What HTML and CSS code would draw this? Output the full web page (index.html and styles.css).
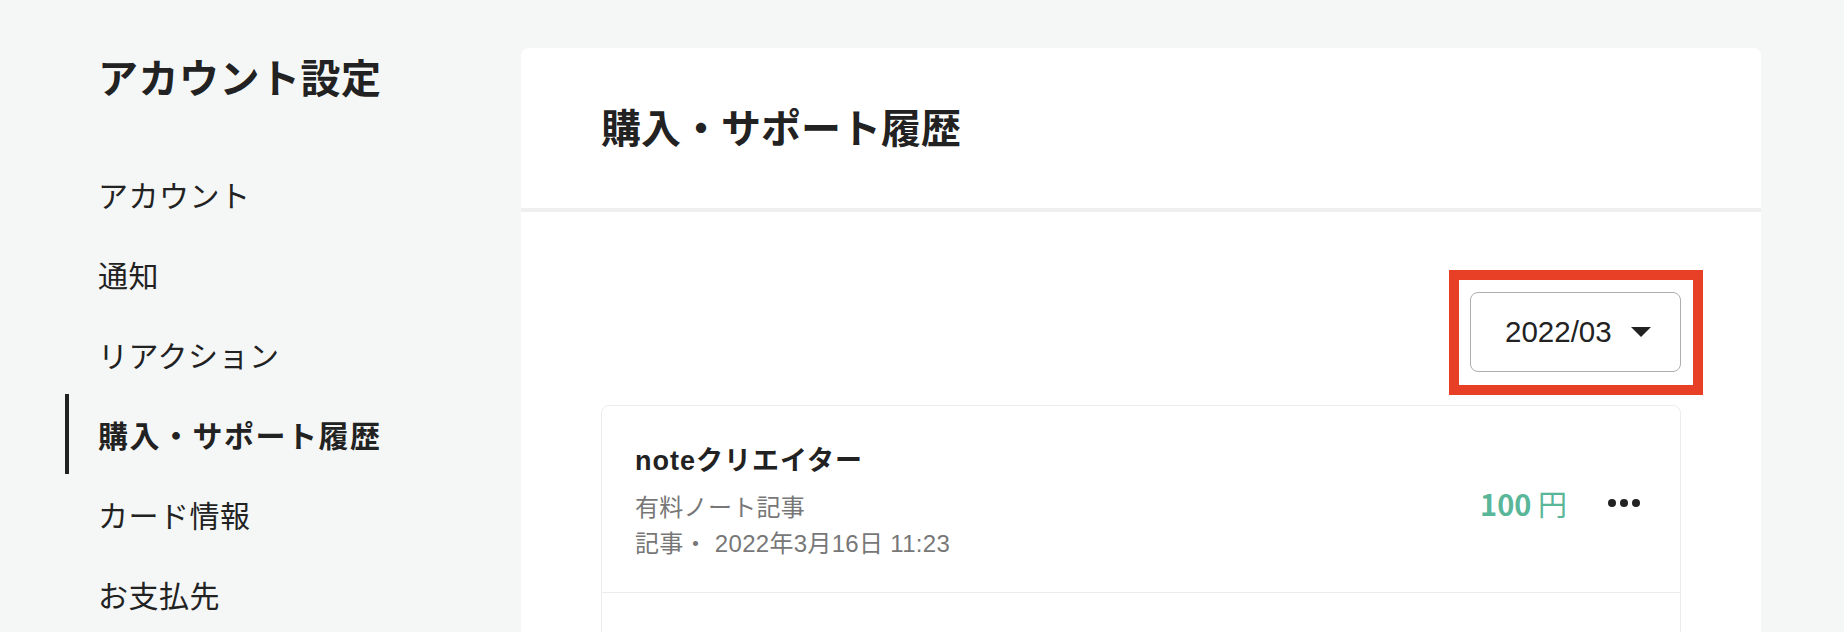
FILE: index.html
```html
<!DOCTYPE html>
<html lang="ja">
<head>
<meta charset="utf-8">
<title>購入・サポート履歴</title>
<link rel="stylesheet" href="styles.css">
</head>
<body>
<div class="page">
  <aside class="sidebar">
    <h1 class="side-title">アカウント設定</h1>
    <nav class="side-nav">
      <a class="nav-item">アカウント</a>
      <a class="nav-item">通知</a>
      <a class="nav-item">リアクション</a>
      <a class="nav-item is-active">購入・サポート履歴</a>
      <a class="nav-item">カード情報</a>
      <a class="nav-item">お支払先</a>
    </nav>
  </aside>
  <main class="panel">
    <header class="panel-head">
      <h2 class="panel-title">購入・サポート履歴</h2>
    </header>
    <section class="panel-body">
      <div class="filter-row">
        <div class="select-wrap">
          <button class="month-select">
            <span class="month-label">2022/03</span>
            <span class="caret"></span>
          </button>
        </div>
      </div>
      <ul class="history">
        <li class="history-item">
          <div class="item-info">
            <div class="item-name">noteクリエイター</div>
            <div class="item-meta item-kind">有料ノート記事</div>
            <div class="item-meta">記事・ 2022年3月16日 11:23</div>
          </div>
          <div class="item-side">
            <div class="price">100 <span class="yen">円</span></div>
            <button class="more" aria-label="メニュー">
              <svg width="32" height="8" viewBox="0 0 32 8"><circle cx="4" cy="4" r="4"/><circle cx="16" cy="4" r="4"/><circle cx="28" cy="4" r="4"/></svg>
            </button>
          </div>
        </li>
        <li class="history-item is-placeholder"></li>
      </ul>
    </section>
  </main>
</div>
</body>
</html>
```

FILE: styles.css
```css
* { box-sizing: border-box; }

html, body {
  margin: 0;
  padding: 0;
  background: #f5f7f6;
  color: #222;
  font-family: "Noto Sans CJK JP", "Noto Sans", sans-serif;
}

.page {
  display: flex;
  align-items: flex-start;
  padding: 46px 0 0 65px;
}

.sidebar {
  width: 456px;
  flex: none;
}

.side-title {
  margin: 0;
  padding-left: 33px;
  font-size: 40px;
  font-weight: 700;
  line-height: 60px;
  letter-spacing: 0.5px;
}

.side-nav {
  display: flex;
  flex-direction: column;
  margin-top: 48px;
}

.nav-item {
  display: block;
  height: 80px;
  line-height: 80px;
  font-size: 30px;
  padding-left: 29px;
  border-left: 4px solid transparent;
  color: #222;
  letter-spacing: 0.5px;
}

.nav-item.is-active {
  border-left-color: #222;
  font-weight: 700;
  letter-spacing: 1.5px;
}

.panel {
  width: 1240px;
  flex: none;
  margin-top: 2px;
  background: #fff;
  border-radius: 8px 8px 0 0;
  min-height: 700px;
}

.panel-head {
  height: 164px;
  display: flex;
  align-items: center;
  padding: 0 80px 4px;
  border-bottom: 4px solid #efefef;
}

.panel-title {
  margin: 0;
  font-size: 40px;
  font-weight: 700;
  line-height: 56px;
}

.panel-body {
  padding: 80px 80px 0;
}

.filter-row {
  display: flex;
  justify-content: flex-end;
}

.select-wrap {
  position: relative;
}

.select-wrap::after {
  content: "";
  position: absolute;
  top: -22px;
  bottom: -23px;
  left: -21px;
  right: -22px;
  border: 10px solid #e84027;
  pointer-events: none;
}

.month-select {
  display: flex;
  align-items: center;
  width: 211px;
  height: 80px;
  padding: 0 0 0 34px;
  gap: 19px;
  background: #fff;
  border: 1.5px solid #aeaeb2;
  border-radius: 8px;
  font-family: "Liberation Sans", Arial, sans-serif;
  font-size: 29.5px;
  color: #222;
}

.caret {
  width: 0;
  height: 0;
  border-left: 10px solid transparent;
  border-right: 10px solid transparent;
  border-top: 10px solid #222;
}

.history {
  list-style: none;
  margin: 33px 0 0;
  padding: 0;
  border: 1px solid #ececec;
  border-radius: 8px;
}

.history-item {
  display: flex;
  align-items: center;
  justify-content: space-between;
  padding: 37px 40px 30px 33px;
  border-bottom: 1px solid #ececec;
}

.history-item.is-placeholder {
  height: 187px;
}

.item-name {
  font-family: "Liberation Sans", "Noto Sans CJK JP", sans-serif;
  font-size: 27px;
  font-weight: 700;
  line-height: 36px;
  letter-spacing: 1px;
  margin-bottom: 11px;
}

.item-meta {
  font-family: "Liberation Sans", "Noto Sans CJK JP", sans-serif;
  font-size: 24px;
  line-height: 36px;
  letter-spacing: 0.3px;
  color: #777;
}

.item-side {
  display: flex;
  align-items: center;
  gap: 41px;
}

.price {
  font-size: 29px;
  font-weight: 700;
  color: #5ab699;
  line-height: 36px;
}

.yen {
  font-weight: 400;
}

.more {
  display: flex;
  padding: 0;
  border: 0;
  background: none;
  fill: #222;
}
```
